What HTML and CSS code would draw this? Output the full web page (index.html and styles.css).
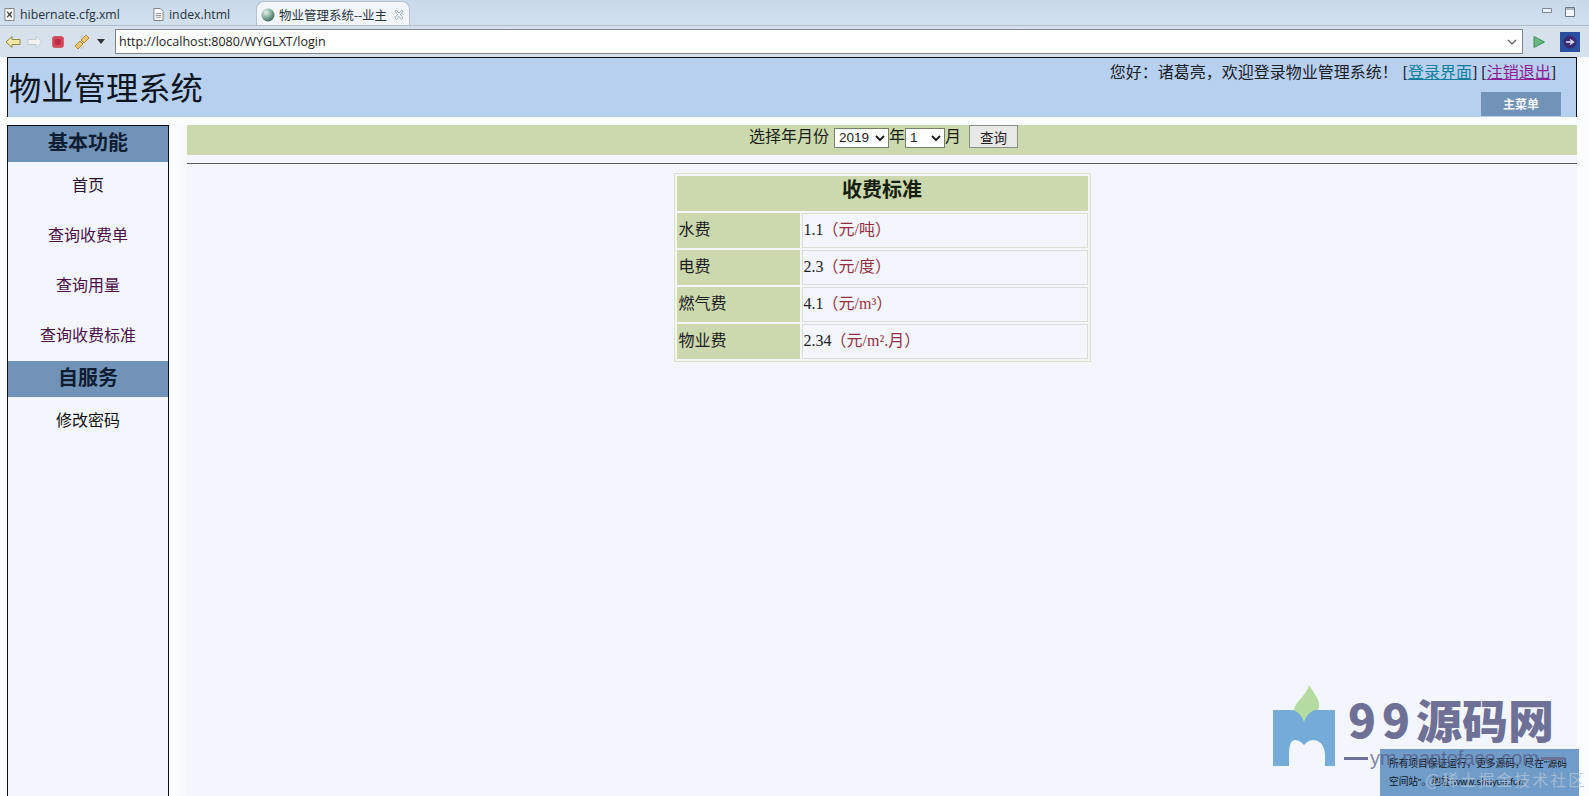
FILE: index.html
```html
<!DOCTYPE html>
<html lang="zh">
<head>
<meta charset="utf-8">
<title>物业管理系统</title>
<link rel="stylesheet" href="styles.css">
</head>
<body>
<div class="tabbar">
  <div class="tab">
    <svg class="tab-ico" viewBox="0 0 12 14"><path d="M1 .5h10v13H1z" fill="#fff" stroke="#777"/><path d="M3.5 4l5 6M8.5 4l-5 6" stroke="#444" stroke-width="1.3"/></svg>
    <span>hibernate.cfg.xml</span>
  </div>
  <div class="tab tab-second">
    <svg class="tab-ico" viewBox="0 0 12 14"><path d="M1 .5h7l3 3v10H1z" fill="#fff" stroke="#777"/><path d="M3 6h6M3 8h6M3 10h6" stroke="#888"/></svg>
    <span>index.html</span>
  </div>
  <div class="tab tab-active">
    <svg class="tab-ico globe" viewBox="0 0 14 14"><defs><radialGradient id="g" cx=".35" cy=".3" r=".8"><stop offset="0" stop-color="#e8f2ea"/><stop offset=".55" stop-color="#7fa596"/><stop offset="1" stop-color="#35574f"/></radialGradient></defs><circle cx="7" cy="7" r="6.5" fill="url(#g)"/></svg>
    <span>物业管理系统--业主</span>
    <svg class="tab-close" viewBox="0 0 10 10"><path d="M1 1l1.500-.5L5 3 7.500.5 9 1 6.500 4.500 9 8l-1.500 1.500L5 6.500 2.500 9.500 1 8l2.500-3.500z" fill="none" stroke="#8a9aa8" stroke-width=".8"/></svg>
  </div>
  <div class="win-ctl">
    <svg viewBox="0 0 10 6" class="ctl-min"><path d="M.5.5h9v4h-9z" fill="#e9eff6" stroke="#7d8a97"/></svg>
    <svg viewBox="0 0 10 10" class="ctl-max"><path d="M.5.500h9v9h-9z" fill="#f4f7fa" stroke="#6d7a87"/><path d="M.5 2h9" stroke="#6d7a87"/></svg>
  </div>
</div>
<div class="toolbar">
  <svg class="tool tool-back" viewBox="0 0 16 14"><path d="M1 7l6-5.500V4.500h8v5H7v3z" fill="#f4e7a8" stroke="#8f8a3c"/></svg>
  <svg class="tool tool-fwd" viewBox="0 0 16 14"><path d="M15 7L9 1.500V4.500H1v5h8v3z" fill="#f1f3f3" stroke="#c3ccd0"/></svg>
  <svg class="tool-stop" viewBox="0 0 12 12"><rect x=".5" y=".5" width="11" height="11" rx="2" fill="#d8455e" stroke="#c66"/><rect x="3" y="3" width="6" height="6" fill="#c02c44"/></svg>
  <svg class="tool-sync" viewBox="0 0 16 16"><path d="M1 12l5-5 3 3-5 5zM7 6l5-5 3 3-5 5z" fill="#ecc76b" stroke="#b58a3c"/><path d="M6 4l3-3M10 12l-3 3" stroke="#c9d1d0" stroke-width="1.500"/></svg>
  <svg class="tool-drop" viewBox="0 0 8 5"><path d="M0 0h8L4 5z" fill="#333"/></svg>
  <div class="address">
    <span>http://localhost:8080/WYGLXT/login</span>
    <svg viewBox="0 0 10 6"><path d="M1 1l4 4 4-4" fill="none" stroke="#555" stroke-width="1.200"/></svg>
  </div>
  <svg class="go" viewBox="0 0 12 12"><path d="M1 .5L11.500 6 1 11.500z" fill="#67b77f" stroke="#3f9160"/></svg>
  <svg class="persp" viewBox="0 0 20 20"><rect width="20" height="20" fill="#2a4fa0"/><circle cx="10" cy="10" r="6.500" fill="#3c2a70"/><path d="M6 10h7M10 7.500l3.500 2.500-3.500 2.500" stroke="#dfe6f5" stroke-width="1.300" fill="none"/></svg>
</div>

<div class="page">
  <header class="top">
    <h1>物业管理系统</h1>
    <div class="top-right">
      <p class="welcome">您好：诸葛亮，欢迎登录物业管理系统！<span class="links">[<a class="link-a" href="#">登录界面</a>] [<a class="link-b" href="#">注销退出</a>]</span></p>
      <div class="main-menu">主菜单</div>
    </div>
  </header>

  <div class="content">
    <aside class="side">
      <h2>基本功能</h2>
      <ul class="menu menu-first">
        <li class="item-dark"><a href="#">首页</a></li>
        <li><a href="#">查询收费单</a></li>
        <li><a href="#">查询用量</a></li>
        <li><a href="#">查询收费标准</a></li>
      </ul>
      <h2>自服务</h2>
      <ul class="menu menu-second">
        <li class="item-black"><a href="#">修改密码</a></li>
      </ul>
    </aside>

    <main class="main">
      <form class="filter">
        <span>选择年月份</span>
        <select class="sel-year"><option>2019</option></select><span>年</span><select class="sel-month"><option>1</option></select><span>月</span>
        <button type="button">查询</button>
      </form>
      <hr class="rule">
      <table class="fees">
        <tr><th colspan="2">收费标准</th></tr>
        <tr><td class="k">水费</td><td>1.1<em>（元/吨）</em></td></tr>
        <tr><td class="k">电费</td><td>2.3<em>（元/度）</em></td></tr>
        <tr><td class="k">燃气费</td><td>4.1<em>（元/m³）</em></td></tr>
        <tr><td class="k">物业费</td><td>2.34<em>（元/m².月）</em></td></tr>
      </table>
    </main>
  </div>
</div>

<div class="notice">
  <p>所有项目保证运行，更多源码，尽在"源码</p>
  <p>空间站"。地址:www.shuyue.fun</p>
</div>
<div class="mark">
  <svg class="mark-logo" viewBox="0 0 62 82">
    <path d="M36 0c5 9 11 14 10 22-1 7-6 12-12 15-7-2-13-6-13-12 1-9 12-13 15-25z" fill="#b5dba0"/>
    <path d="M0 25h19c6 1 10 6 12 12 2-6 6-11 12-12h19v56H52V70C52 60 46 55 40 55 36 55 33 58 31 60 29 58 26 55 22 55 18 55 16 60 16 70V81H0z" fill="#75abd8"/>
  </svg>
  <div class="mark-name"><span class="mark-num">99</span>源码网</div>
  <div class="mark-url"><i></i><span>ym.maptoface.com</span><i></i></div>
</div>
<div class="credit">@稀土掘金技术社区</div>
</body>
</html>
```

FILE: styles.css
```css
* { box-sizing: border-box; }
html, body { margin: 0; height: 100%; overflow: hidden; }
body {
  position: relative;
  width: 1589px;
  height: 796px;
  background: #fbfcfe;
  font-family: "Liberation Serif", "Noto Sans CJK SC", serif;
  font-size: 16px;
  color: #111;
}

/* IDE chrome */
.tabbar {
  height: 26px;
  display: flex;
  align-items: stretch;
  background: linear-gradient(#c8d9ea, #d2e0ee);
  border-bottom: 1px solid #aebdcb;
  font-family: "Open Sans", "Noto Sans CJK SC", sans-serif;
  font-size: 12.300px;
  color: #26323c;
}
.tab { display: flex; align-items: center; gap: 5px; padding: 3px 0 0 4px; width: 152px; }
.tab-second { width: 104px; padding-left: 1px; }
.tab-active {
  width: 154px;
  margin-top: 1px;
  padding: 2px 0 0 4px;
  gap: 4px;
  background: #f2f6fa;
  border: 1px solid #b5c4d2;
  border-bottom: 0;
  border-radius: 8px 8px 0 0;
  font-size: 12.500px;
}
.tab-ico { width: 11px; height: 13px; flex: none; }
.globe { width: 14px; height: 14px; }
.tab-close { width: 10px; height: 10px; margin-left: 3px; flex: none; }
.win-ctl { margin-left: auto; display: flex; align-items: flex-start; gap: 13px; padding: 7px 14px 0 0; }
.ctl-min { width: 10px; height: 6px; margin-top: 1px; }
.ctl-max { width: 10px; height: 10px; }

.toolbar {
  height: 31px;
  display: flex;
  align-items: center;
  padding-left: 5px;
  background: #d6e1ec;
}
.tool { width: 16px; height: 14px; flex: none; }
.tool-back { margin-right: 6px; }
.tool-stop { width: 12px; height: 12px; margin: 0 10px 0 9px; flex: none; }
.tool-sync { width: 16px; height: 16px; flex: none; }
.tool-drop { width: 8px; height: 5px; margin: 0 10px 0 7px; flex: none; }
.address {
  width: 1408px;
  height: 25px;
  display: flex;
  align-items: center;
  justify-content: space-between;
  padding: 0 5px 0 3px;
  background: #fff;
  border: 1px solid #7e8790;
  font-family: "Open Sans", sans-serif;
  font-size: 12.500px;
  color: #222;
}
.address svg { width: 10px; height: 6px; }
.go { width: 12px; height: 12px; margin-left: 10px; }
.persp { width: 20px; height: 20px; margin-left: 15px; }

/* page */
.page { padding: 0 12px 0 7px; height: 739px; display: flex; flex-direction: column; }
.top {
  height: 60px;
  display: flex;
  justify-content: space-between;
  background: #b8d0f0;
  border: 1px solid #111;
  border-bottom: 0;
  flex: none;
}
.top h1 { margin: 9px 0 0 1px; font-size: 32.300px; line-height: 44px; font-weight: 400; color: #0c1420; }
.top-right { display: flex; flex-direction: column; align-items: flex-end; padding-right: 15px; }
.welcome { margin: 3px 5px 0 0; font-size: 16px; line-height: 24px; color: #1a2028; white-space: nowrap; }
.links { margin-left: 5px; }
.link-a { color: #0e7f9c; }
.link-b { color: #8a1f97; }
.main-menu {
  width: 80px;
  height: 24px;
  margin-top: 7px;
  background: #7193b7;
  color: #f2f5fa;
  font-size: 12px;
  font-weight: 700;
  line-height: 26px;
  text-align: center;
}

.content { flex: 1; display: flex; gap: 18px; padding-top: 8px; min-height: 0; }
.side {
  width: 162px;
  flex: none;
  background: #f3f6fd;
  border: 1px solid #111;
  border-bottom: 0;
}
.side h2 {
  margin: 0;
  height: 36px;
  background: #7193b7;
  color: #0f1d33;
  font-size: 20px;
  line-height: 35px;
  text-align: center;
  font-weight: 700;
}
.menu { list-style: none; margin: 0; padding: 0; text-align: center; }
.menu-first { height: 199px; }
.menu li { height: 50px; line-height: 48px; }
.menu a { color: #4c0f47; text-decoration: none; }
.item-dark a { color: #2a1030; }
.item-black a { color: #111; }

.main { flex: 1; background: #f3f6fd; box-shadow: -8px 0 0 #f9fafe; }
.filter {
  height: 30px;
  display: flex;
  align-items: center;
  justify-content: center;
  background: #ccd8ad;
  color: #1a1f18;
  padding: 0 0 11px 3px;
}
.filter select {
  height: 20px;
  padding: 0;
  margin-top: 6px;
  background: #fff;
  border: 1px solid #76806f;
  font-family: "Liberation Sans", sans-serif;
  font-size: 13.500px;
  color: #222;
}
.sel-year { width: 55px; margin-left: 5px; }
.sel-month { width: 40px; }
.filter button {
  width: 49px;
  height: 23px;
  margin: 4px 0 0 8px;
  padding: 0;
  background: #e8e9e6;
  border: 1px solid #8a8f86;
  font-family: "Liberation Sans", "Noto Sans CJK SC", sans-serif;
  font-size: 13.500px;
  color: #222;
}
.rule { height: 1px; margin: 8px 0 9px; background: #555b63; border: 0; }

.fees {
  width: 417px;
  margin: 0 auto;
  border: 1px solid #d9e2cd;
  border-spacing: 2px;
  border-collapse: separate;
}
.fees th {
  height: 35px;
  padding: 0 0 8px;
  background: #ccd8ad;
  border: 0;
  font-size: 20px;
  line-height: 24px;
  color: #16200f;
}
.fees td {
  height: 35px;
  padding: 0 1px 5px;
  border: 1px solid #d9dfd5;
  color: #1c2024;
}
.fees td.k { width: 123px; background: #ccd8ad; border-color: #ccd8ad; }
.fees em { font-style: normal; color: #93303f; margin-left: -1px; }

/* watermark */
.notice {
  position: absolute;
  left: 1380px;
  top: 749px;
  width: 199px;
  height: 47px;
  padding: 6px 0 0 9px;
  background: #6f9cc8;
  font-family: "Liberation Sans", "Noto Sans CJK SC", sans-serif;
  font-size: 9.700px;
  line-height: 18px;
  color: #10151c;
}
.notice p { margin: 0; white-space: nowrap; }
.mark { position: absolute; left: 1273px; top: 685px; width: 300px; height: 111px; }
.mark-logo { position: absolute; left: 0; top: 0; width: 62px; height: 82px; }
.mark-name {
  position: absolute;
  left: 75px;
  top: 8px;
  font-family: "Noto Sans CJK SC", sans-serif;
  font-size: 46px;
  line-height: 50px;
  font-weight: 900;
  color: #6e7096;
  white-space: nowrap;
}
.mark-num { letter-spacing: 6px; }
.mark-url {
  position: absolute;
  left: 71px;
  top: 61px;
  width: 221px;
  display: flex;
  align-items: center;
  justify-content: space-between;
  font-family: "Liberation Sans", sans-serif;
  font-size: 20px;
  line-height: 24px;
  color: rgba(84, 88, 130, .72);
  white-space: nowrap;
}
.mark-url i { flex: 0 0 24px; height: 3px; background: #6e7096; }
.credit {
  position: absolute;
  left: 1425px;
  top: 769px;
  font-family: "Noto Sans CJK SC", sans-serif;
  font-size: 16px;
  line-height: 20px;
  letter-spacing: 2px;
  color: rgba(180, 195, 215, .78);
  white-space: nowrap;
}
```
